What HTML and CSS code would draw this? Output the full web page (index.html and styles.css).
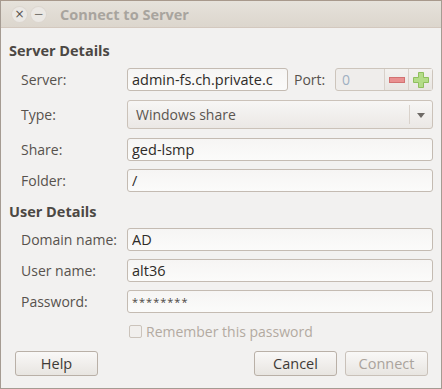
FILE: index.html
```html
<!DOCTYPE html>
<html lang="en">
<head>
    <meta charset="UTF-8">
    <title>Connect to Server</title>
    <link rel="stylesheet" href="styles.css">
</head>
<body>
    <div class="window">
        <div class="titlebar">
            <span class="wm-btn wm-close">&#215;</span>
            <span class="wm-btn wm-min">&#8722;</span>
            <span class="title">Connect to Server</span>
        </div>
        <div class="content">
            <h2 class="section-title">Server Details</h2>
            <div class="fields">
                <div class="row">
                    <label class="label" for="server">Server:</label>
                    <input class="entry entry-server" id="server" type="text" value="admin-fs.ch.private.c">
                    <span class="port-label">Port:</span>
                    <div class="spin">
                        <div class="spin-entry">0</div>
                        <div class="spin-btn">
                            <svg width="18" height="8" viewBox="0 0 18 8"><rect x="1.5" y="1.5" width="15" height="5" fill="#e99090" stroke="#d27272"/></svg>
                        </div>
                        <div class="spin-btn">
                            <svg width="18" height="18" viewBox="0 0 18 18"><path d="M6.5 1.5h5v5h5v5h-5v5h-5v-5h-5v-5h5z" fill="#b4dc88" stroke="#8fbf5d"/></svg>
                        </div>
                    </div>
                </div>
                <div class="row row-combo">
                    <span class="label">Type:</span>
                    <div class="combo">
                        <span class="combo-text">Windows share</span>
                        <span class="combo-sep"></span>
                        <span class="combo-arrow"></span>
                    </div>
                </div>
                <div class="row">
                    <label class="label" for="share">Share:</label>
                    <input class="entry" id="share" type="text" value="ged-lsmp">
                </div>
                <div class="row">
                    <label class="label" for="folder">Folder:</label>
                    <input class="entry" id="folder" type="text" value="/">
                </div>
            </div>

            <h2 class="section-title user-title">User Details</h2>
            <div class="fields">
                <div class="row">
                    <label class="label" for="domain">Domain name:</label>
                    <input class="entry" id="domain" type="text" value="AD">
                </div>
                <div class="row">
                    <label class="label" for="user">User name:</label>
                    <input class="entry" id="user" type="text" value="alt36">
                </div>
                <div class="row">
                    <label class="label" for="password">Password:</label>
                    <input class="entry entry-pass" id="password" type="text" value="********">
                </div>
                <div class="row row-check">
                    <span class="label"></span>
                    <span class="checkbox"></span>
                    <span class="check-text">Remember this password</span>
                </div>
            </div>

            <div class="buttons">
                <button class="btn">Help</button>
                <div class="buttons-right">
                    <button class="btn">Cancel</button>
                    <button class="btn btn-disabled">Connect</button>
                </div>
            </div>
        </div>
    </div>
</body>
</html>
```

FILE: styles.css
```css
body {
    margin: 0;
    font-family: "Open Sans", "Noto Sans", sans-serif;
    font-size: 14px;
    color: #4c4844;
    background: #f2f1f0;
}

.window {
    width: 442px;
    height: 389px;
    box-sizing: border-box;
    border: 1px solid #a59b92;
    border-top: 1px solid #a8998c;
    background: #f2f1f0;
    display: flex;
    flex-direction: column;
}

.titlebar {
    height: 26px;
    display: flex;
    align-items: center;
    background: linear-gradient(#e6e2db, #dcd6cd);
    border-bottom: 1px solid #d3c8be;
    padding-left: 3px;
}

.wm-btn {
    width: 15px;
    height: 15px;
    border-radius: 50%;
    background: #ebe8e4;
    box-shadow: 0 0 0 1px #ddd7d0;
    display: flex;
    align-items: center;
    justify-content: center;
    font-family: "DejaVu Sans", sans-serif;
    font-size: 12px;
    line-height: 1;
    color: #55524e;
    margin-left: 4px;
}

.wm-close {
    margin-left: 8px;
}

.wm-min {
    color: #7a7670;
}

.title {
    margin-left: 14px;
    font-weight: bold;
    font-size: 14.5px;
    color: #a8a49e;
}

.content {
    flex: 1;
    padding: 0 8px;
    display: flex;
    flex-direction: column;
}

.section-title {
    margin: 13px 0 0 0;
    font-size: 14.5px;
    line-height: 20px;
    font-weight: bold;
    color: #4c4844;
}

.user-title {
    margin-top: 10px;
}

.fields {
    margin-top: 7px;
    display: flex;
    flex-direction: column;
    gap: 8px;
}

.user-title + .fields {
    margin-top: 6px;
}

.row {
    display: flex;
    align-items: center;
    height: 23px;
}

.row-combo {
    height: 29px;
    margin: 1px 0;
}

.label {
    width: 118px;
    flex: none;
    padding-left: 12px;
    box-sizing: border-box;
    white-space: nowrap;
    color: #57524d;
}

.entry {
    flex: 1;
    min-width: 0;
    height: 23px;
    box-sizing: border-box;
    border: 1px solid #c4bbb2;
    border-radius: 3px;
    background: linear-gradient(#f6f5f4, #fbfbfa);
    padding: 0 4px;
    font: inherit;
    font-size: 14.5px;
    color: #2e2b28;
    outline: none;
}

.entry-server {
    flex: none;
    width: 161px;
}

.entry-pass {
    font-size: 11px;
    letter-spacing: 1px;
    color: #4a4642;
}

.port-label {
    margin-left: 6px;
    width: 41px;
    color: #57524d;
}

.spin {
    flex: 1;
    display: flex;
    height: 23px;
    box-sizing: border-box;
    border: 1px solid #cdc5bc;
    border-radius: 3px;
    background: #efedeb;
}

.spin-entry {
    flex: 1;
    padding-left: 6px;
    line-height: 21px;
    color: #9fb0c2;
}

.spin-btn {
    width: 23px;
    border-left: 1px solid #d8d1ca;
    display: flex;
    align-items: center;
    justify-content: center;
    background: linear-gradient(#f3f1ef, #e9e6e2);
}

.combo {
    flex: 1;
    height: 29px;
    box-sizing: border-box;
    border: 1px solid #cbc2b9;
    border-radius: 3px;
    background: linear-gradient(#f7f6f5, #ebe8e5);
    display: flex;
    align-items: center;
    padding-left: 8px;
}

.combo-text {
    flex: 1;
    color: #5a5550;
}

.combo-sep {
    width: 1px;
    height: 19px;
    background: #d9d2cb;
}

.combo-arrow {
    width: 0;
    height: 0;
    border-left: 4px solid transparent;
    border-right: 4px solid transparent;
    border-top: 5px solid #6e6a66;
    margin: 2px 7px 0 7px;
}

.row-check {
    height: 14px;
    margin-top: 3px;
}

.checkbox {
    width: 13px;
    height: 13px;
    box-sizing: border-box;
    border: 1px solid #cbc3bb;
    border-radius: 2px;
    background: #f1efed;
    margin-left: 2px;
}

.check-text {
    margin-left: 4px;
    color: #b3aaa1;
}

.buttons {
    margin-top: 13px;
    display: flex;
    justify-content: space-between;
    padding-left: 6px;
    padding-right: 5px;
}

.buttons-right {
    display: flex;
    gap: 8px;
}

.btn {
    width: 83px;
    height: 25px;
    box-sizing: border-box;
    border: 1px solid #b9b0a7;
    border-radius: 3px;
    background: linear-gradient(#f9f8f7, #e8e5e1);
    font: inherit;
    font-size: 14.5px;
    color: #3e3a36;
    padding: 0;
}

.btn-disabled {
    color: #aaa39c;
    border-color: #c9c1b9;
}
```
